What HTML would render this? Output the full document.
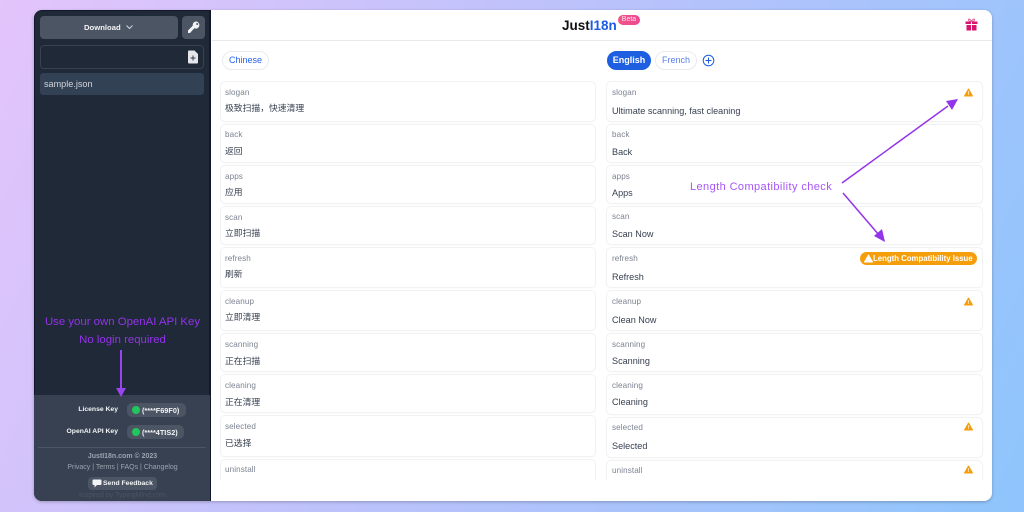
<!DOCTYPE html>
<html><head><meta charset="utf-8">
<style>
*{box-sizing:border-box}
html,body{margin:0;padding:0;width:1024px;height:512px;overflow:hidden}
body{background:linear-gradient(115deg,#e3c4fb 0%,#b9c2fb 50%,#8ec5fc 100%);font-family:"Liberation Sans","Noto Sans CJK SC",sans-serif;position:relative}
.a{position:absolute;white-space:nowrap}
#win{position:absolute;left:34px;top:10px;width:958px;height:491px;background:#fff;border-radius:8px;overflow:hidden;box-shadow:0 1px 3px rgba(0,0,0,.25)}
#side{position:absolute;left:0;top:0;width:177px;height:491px;background:#1f2937;border:1px solid #111827;border-right:2px solid #111827;border-radius:8px 0 0 8px}
.card{position:absolute;border:1px solid #f1f2f4;border-radius:5px;background:#fff;box-shadow:0 1px 1px rgba(0,0,0,.02)}
.lbl{position:absolute;font-size:8.1px;color:#7b8290;white-space:nowrap;letter-spacing:.1px;margin-top:.5px}
.val{position:absolute;font-size:9.1px;color:#374151;white-space:nowrap;margin-top:1px}
.zh{position:absolute;font-size:8.8px;color:#374151;white-space:nowrap;margin-top:-1px}
.pill{position:absolute;height:19px;border-radius:10px;font-size:9px;line-height:17px;text-align:center;border:1px solid #e9ebef;color:#2563eb}
.pk{position:absolute;font-size:6.8px;font-weight:bold;color:#f3f4f6;white-space:nowrap}
.kb{position:absolute;height:14px;background:#4b5563;border-radius:5px;font-size:7.3px;font-weight:bold;color:#f3f4f6;line-height:15px;padding-left:15px;white-space:nowrap}
.dot{position:absolute;left:5px;top:3px;width:8px;height:8px;border-radius:50%;background:#22c55e}
#clip{position:absolute;left:0;top:0;width:1024px;height:480px;overflow:hidden;pointer-events:none}
.w{position:absolute}
</style></head><body>
<div id="win"></div>
<div id="side" style="position:absolute;left:34px;top:10px;height:491px;width:177px">
  <div class="a" style="left:-1px;top:384px;width:176px;height:106px;background:#374151;border-radius:0 0 0 8px"></div>
  <div class="a" style="left:5px;top:5px;width:138px;height:23px;background:#4b5563;border-radius:4px"></div>
  <div class="a" style="left:49px;top:5px;color:#f3f4f6;font-size:7.7px;font-weight:bold;line-height:23px">Download</div>
  <svg class="a" style="left:90px;top:13px" width="9" height="6" viewBox="0 0 9 6"><path d="M1.500 1.500L4.500 4.500L7.500 1.500" fill="none" stroke="#d1d5db" stroke-width="1"/></svg>
  <div class="a" style="left:147px;top:5px;width:23px;height:23px;background:#4b5563;border-radius:4px"><svg width="23" height="23" viewBox="0 0 23 23"><path d="M14.500 5.500A3.600 3.600 0 1 1 12.300 12.300L8 17H6V14.500L10.700 9.700A3.600 3.600 0 0 1 14.500 5.500Z" fill="#f3f4f6"/><circle cx="15.200" cy="8" r="1" fill="#4b5563"/></svg></div>
  <div class="a" style="left:5px;top:34px;width:164px;height:24px;border:1px solid #374151;border-radius:4px"></div>
  <svg class="a" style="left:152px;top:39px" width="12" height="14" viewBox="0 0 12 14"><path d="M1 1.500Q1 .5 2 .5H7.500L11 4V12.500Q11 13.500 10 13.500H2Q1 13.500 1 12.500Z" fill="#e5e7eb"/><path d="M6 5.500V10.500M3.500 8H8.500" stroke="#374151" stroke-width="1"/></svg>
  <div class="a" style="left:5px;top:62px;width:164px;height:22px;background:#334155;border-radius:3px;color:#d1d5db;font-size:9.100px;line-height:23px;padding-left:4px">sample.json</div>

  <div class="pk" style="right:91px;top:395px">License Key</div>
  <div class="kb" style="left:92px;top:392px;width:59px;">(****F69F0)<i class="dot"></i></div>
  <div class="pk" style="right:91px;top:417px">OpenAI API Key</div>
  <div class="kb" style="left:92px;top:414px;width:57px;">(****4TIS2)<i class="dot"></i></div>
  <div class="a" style="left:3px;top:436px;width:168px;height:1px;background:#4b5563"></div>
  <div class="a" style="left:0;width:175px;text-align:center;top:442px;font-size:7px;font-weight:bold;color:#9ca3af">JustI18n.com © 2023</div>
  <div class="a" style="left:0;width:175px;text-align:center;top:453px;font-size:7px;color:#9ca3af">Privacy | Terms | FAQs | Changelog</div>
  <div class="a" style="left:53px;top:466px;width:69px;height:13px;background:#4b5563;border-radius:4px;font-size:6.800px;font-weight:bold;color:#f3f4f6;line-height:13px;padding-left:15px">Send Feedback
    <svg class="a" style="left:4px;top:2px" width="10" height="9" viewBox="0 0 10 9"><path d="M1.500 .5H8.500Q9.500 .5 9.500 1.500V5Q9.500 6 8.500 6H5L2.500 8.500V6H1.500Q.5 6 .5 5V1.500Q.5 .5 1.500 .5Z" fill="#f3f4f6"/></svg>
  </div>
  <div class="a" style="left:0;width:175px;text-align:center;top:481px;font-size:7px;color:#4b5563">Inspired by TypingMind.com</div>
</div>

<!-- header -->
<div class="a" style="left:212px;top:40px;width:780px;height:1px;background:#e8e9eb"></div>
<div class="a" style="left:562px;top:17px;font-size:13.500px;font-weight:bold;color:#111;line-height:17px">Just<span style="color:#1d5be8">I18n</span></div>
<div class="a" style="left:618px;top:15px;width:22px;height:10px;border-radius:5px;background:linear-gradient(90deg,#f0568a,#f0468f);color:#ffe6ef;font-size:7px;line-height:10px;text-align:center">Beta</div>
<svg class="a" style="left:965px;top:18px" width="13" height="13" viewBox="0 0 13 13"><path d="M.5 3.500H12.500V6H.5ZM1.500 7H11.500V12.500H1.500Z" fill="#d9146f"/><path d="M6.500 3.500V12.500" stroke="#fff" stroke-width="1"/><path d="M6.500 3.500C5 .5 3 .5 3.500 2S5 3.500 6.500 3.500C8 3.500 9 3.500 9.500 2S8 .5 6.500 3.500Z" fill="none" stroke="#e0558f" stroke-width=".9"/></svg>

<!-- tabs -->
<div class="pill" style="left:222px;top:51px;width:47px">Chinese</div>
<div class="pill" style="left:607px;top:51px;width:44px;background:#1d5fe0;border-color:#1d5fe0;color:#fff;font-weight:bold">English</div>
<div class="pill" style="left:655px;top:51px;width:42px;color:#5b80ea">French</div>
<svg class="a" style="left:702px;top:54px" width="13" height="13" viewBox="0 0 13 13"><circle cx="6.500" cy="6.500" r="5.300" fill="none" stroke="#1d5fe0" stroke-width="1"/><path d="M6.500 3.500V9.500M3.500 6.500H9.500" stroke="#1d5fe0" stroke-width="1"/></svg>

<div id="clip">
<!-- left cards -->
<div class="card" style="left:220px;top:81px;width:376px;height:41px"></div><div class="lbl" style="left:225px;top:87px">slogan</div><div class="zh" style="left:225px;top:102px">极致扫描，快速清理</div>
<div class="card" style="left:220px;top:124px;width:376px;height:39px"></div><div class="lbl" style="left:225px;top:129px">back</div><div class="zh" style="left:225px;top:145px">返回</div>
<div class="card" style="left:220px;top:165px;width:376px;height:39px"></div><div class="lbl" style="left:225px;top:171px">apps</div><div class="zh" style="left:225px;top:186px">应用</div>
<div class="card" style="left:220px;top:206px;width:376px;height:39px"></div><div class="lbl" style="left:225px;top:212px">scan</div><div class="zh" style="left:225px;top:227px">立即扫描</div>
<div class="card" style="left:220px;top:247px;width:376px;height:41px"></div><div class="lbl" style="left:225px;top:253px">refresh</div><div class="zh" style="left:225px;top:268px">刷新</div>
<div class="card" style="left:220px;top:290px;width:376px;height:41px"></div><div class="lbl" style="left:225px;top:296px">cleanup</div><div class="zh" style="left:225px;top:311px">立即清理</div>
<div class="card" style="left:220px;top:333px;width:376px;height:39px"></div><div class="lbl" style="left:225px;top:339px">scanning</div><div class="zh" style="left:225px;top:355px">正在扫描</div>
<div class="card" style="left:220px;top:374px;width:376px;height:39px"></div><div class="lbl" style="left:225px;top:380px">cleaning</div><div class="zh" style="left:225px;top:396px">正在清理</div>
<div class="card" style="left:220px;top:415px;width:376px;height:42px"></div><div class="lbl" style="left:225px;top:421px">selected</div><div class="zh" style="left:225px;top:437px">已选择</div>
<div class="card" style="left:220px;top:459px;width:376px;height:42px"></div><div class="lbl" style="left:225px;top:464px">uninstall</div>

<!-- right cards -->
<div class="card" style="left:606px;top:81px;width:377px;height:41px"></div><div class="lbl" style="left:612px;top:87px">slogan</div><div class="val" style="left:612px;top:105px">Ultimate scanning, fast cleaning</div>
<div class="card" style="left:606px;top:124px;width:377px;height:39px"></div><div class="lbl" style="left:612px;top:129px">back</div><div class="val" style="left:612px;top:146px">Back</div>
<div class="card" style="left:606px;top:165px;width:377px;height:39px"></div><div class="lbl" style="left:612px;top:171px">apps</div><div class="val" style="left:612px;top:187px">Apps</div>
<div class="card" style="left:606px;top:206px;width:377px;height:39px"></div><div class="lbl" style="left:612px;top:211px">scan</div><div class="val" style="left:612px;top:228px">Scan Now</div>
<div class="card" style="left:606px;top:247px;width:377px;height:41px"></div><div class="lbl" style="left:612px;top:253px">refresh</div><div class="val" style="left:612px;top:271px">Refresh</div>
<div class="card" style="left:606px;top:290px;width:377px;height:41px"></div><div class="lbl" style="left:612px;top:296px">cleanup</div><div class="val" style="left:612px;top:314px">Clean Now</div>
<div class="card" style="left:606px;top:333px;width:377px;height:39px"></div><div class="lbl" style="left:612px;top:339px">scanning</div><div class="val" style="left:612px;top:355px">Scanning</div>
<div class="card" style="left:606px;top:374px;width:377px;height:41px"></div><div class="lbl" style="left:612px;top:380px">cleaning</div><div class="val" style="left:612px;top:396px">Cleaning</div>
<div class="card" style="left:606px;top:417px;width:377px;height:41px"></div><div class="lbl" style="left:612px;top:422px">selected</div><div class="val" style="left:612px;top:440px">Selected</div>
<div class="card" style="left:606px;top:460px;width:377px;height:42px"></div><div class="lbl" style="left:612px;top:465px">uninstall</div>

<svg class="w" style="left:964px;top:88px" width="9" height="9" viewBox="0 0 9 9"><path d="M4.500 1L8.500 8H.5Z" fill="#f59e0b" stroke="#f59e0b" stroke-linejoin="round"/><path d="M4.500 3.200V5.500M4.500 6.300V7" stroke="#fff" stroke-width=".8"/></svg>
<svg class="w" style="left:964px;top:297px" width="9" height="9" viewBox="0 0 9 9"><path d="M4.500 1L8.500 8H.5Z" fill="#f59e0b" stroke="#f59e0b" stroke-linejoin="round"/><path d="M4.500 3.200V5.500M4.500 6.300V7" stroke="#fff" stroke-width=".8"/></svg>
<svg class="w" style="left:964px;top:422px" width="9" height="9" viewBox="0 0 9 9"><path d="M4.500 1L8.500 8H.5Z" fill="#f59e0b" stroke="#f59e0b" stroke-linejoin="round"/><path d="M4.500 3.200V5.500M4.500 6.300V7" stroke="#fff" stroke-width=".8"/></svg>
<svg class="w" style="left:964px;top:465px" width="9" height="9" viewBox="0 0 9 9"><path d="M4.500 1L8.500 8H.5Z" fill="#f59e0b" stroke="#f59e0b" stroke-linejoin="round"/><path d="M4.500 3.200V5.500M4.500 6.300V7" stroke="#fff" stroke-width=".8"/></svg>
</div>

<!-- badge -->
<div class="a" style="left:860px;top:252px;width:117px;height:13px;border-radius:7px;background:#f59e0b;color:#fff;font-size:7.800px;font-weight:bold;line-height:13px;padding-left:13px">Length Compatibility Issue
<svg class="a" style="left:4px;top:2px" width="9" height="9" viewBox="0 0 9 9"><path d="M4.500 1L8.500 8H.5Z" fill="#fff" stroke="#fff" stroke-linejoin="round"/></svg></div>

<!-- annotations -->
<div class="a" style="left:690px;top:181px;font-size:11px;color:#a855f7;letter-spacing:.41px;line-height:13px">Length Compatibility check</div>
<div class="a" style="left:34px;width:177px;text-align:center;top:315px;font-size:11.400px;color:#9333ea;line-height:14px;z-index:3">Use your own OpenAI API Key</div>
<div class="a" style="left:34px;width:177px;text-align:center;top:333px;font-size:11.400px;color:#9333ea;line-height:14px;z-index:3">No login required</div>
<svg class="a" style="left:0;top:0;z-index:4" width="1024" height="512" viewBox="0 0 1024 512">
  <path d="M842 183L948 106" stroke="#9333ea" stroke-width="1.500" fill="none"/>
  <path d="M958 99L946 101L952 110Z" fill="#9333ea"/>
  <path d="M843 193L879 235" stroke="#9333ea" stroke-width="1.500" fill="none"/>
  <path d="M885 242L874 236L882 229Z" fill="#9333ea"/>
  <path d="M121 350V388" stroke="#9a44f0" stroke-width="2" fill="none"/>
  <path d="M116 388H126L121 397Z" fill="#9a44f0"/>
</svg>
</body></html>
